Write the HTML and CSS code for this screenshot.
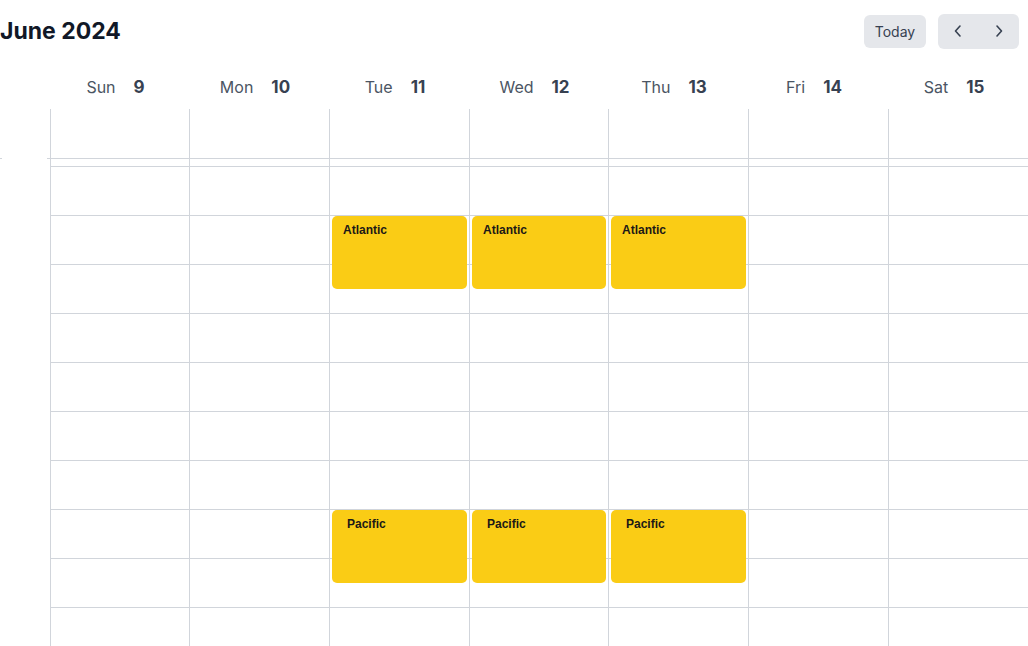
FILE: index.html
```html
<!DOCTYPE html>
<html lang="en">
<head>
<meta charset="utf-8">
<title>June 2024</title>
<link rel="stylesheet" href="styles.css">
</head>
<body>
<div class="app">
  <header class="topbar">
    <h1 class="title">June 2024</h1>
    <div class="controls">
      <button class="btn today">Today</button>
      <div class="btn nav">
        <span class="chev"><svg width="10" height="14" viewBox="0 0 10 14"><path d="M7 2 L2.5 7 L7 12" fill="none" stroke="#374151" stroke-width="1.6" stroke-linecap="round" stroke-linejoin="round"/></svg></span>
        <span class="chev"><svg width="10" height="14" viewBox="0 0 10 14"><path d="M3 2 L7.5 7 L3 12" fill="none" stroke="#374151" stroke-width="1.6" stroke-linecap="round" stroke-linejoin="round"/></svg></span>
      </div>
    </div>
  </header>

  <div class="dayhead">
    <div class="gutter-head"></div>
    <div class="dh"><span class="dn">Sun</span><span class="dd">9</span></div>
    <div class="dh"><span class="dn">Mon</span><span class="dd">10</span></div>
    <div class="dh"><span class="dn">Tue</span><span class="dd">11</span></div>
    <div class="dh"><span class="dn">Wed</span><span class="dd">12</span></div>
    <div class="dh"><span class="dn">Thu</span><span class="dd">13</span></div>
    <div class="dh"><span class="dn">Fri</span><span class="dd">14</span></div>
    <div class="dh"><span class="dn">Sat</span><span class="dd">15</span></div>
  </div>

  <div class="grid">
    <div class="gutter">
      <div class="g-allday"></div>
    </div>
    <div class="col">
      <div class="allday"></div><div class="spacer"></div>
      <div class="slot"></div><div class="slot"></div><div class="slot"></div><div class="slot"></div><div class="slot"></div><div class="slot"></div><div class="slot"></div><div class="slot"></div><div class="slot"></div><div class="slot"></div>
    </div>
    <div class="col">
      <div class="allday"></div><div class="spacer"></div>
      <div class="slot"></div><div class="slot"></div><div class="slot"></div><div class="slot"></div><div class="slot"></div><div class="slot"></div><div class="slot"></div><div class="slot"></div><div class="slot"></div><div class="slot"></div>
    </div>
    <div class="col">
      <div class="allday"></div><div class="spacer"></div>
      <div class="slot"></div>
      <div class="slot"><div class="event">Atlantic</div></div>
      <div class="slot"></div><div class="slot"></div><div class="slot"></div><div class="slot"></div><div class="slot"></div>
      <div class="slot"><div class="event pac">Pacific</div></div>
      <div class="slot"></div><div class="slot"></div>
    </div>
    <div class="col">
      <div class="allday"></div><div class="spacer"></div>
      <div class="slot"></div>
      <div class="slot"><div class="event">Atlantic</div></div>
      <div class="slot"></div><div class="slot"></div><div class="slot"></div><div class="slot"></div><div class="slot"></div>
      <div class="slot"><div class="event pac">Pacific</div></div>
      <div class="slot"></div><div class="slot"></div>
    </div>
    <div class="col">
      <div class="allday"></div><div class="spacer"></div>
      <div class="slot"></div>
      <div class="slot"><div class="event">Atlantic</div></div>
      <div class="slot"></div><div class="slot"></div><div class="slot"></div><div class="slot"></div><div class="slot"></div>
      <div class="slot"><div class="event pac">Pacific</div></div>
      <div class="slot"></div><div class="slot"></div>
    </div>
    <div class="col">
      <div class="allday"></div><div class="spacer"></div>
      <div class="slot"></div><div class="slot"></div><div class="slot"></div><div class="slot"></div><div class="slot"></div><div class="slot"></div><div class="slot"></div><div class="slot"></div><div class="slot"></div><div class="slot"></div>
    </div>
    <div class="col">
      <div class="allday"></div><div class="spacer"></div>
      <div class="slot"></div><div class="slot"></div><div class="slot"></div><div class="slot"></div><div class="slot"></div><div class="slot"></div><div class="slot"></div><div class="slot"></div><div class="slot"></div><div class="slot"></div>
    </div>
  </div>
</div>
</body>
</html>
```

FILE: styles.css
```css
html, body {
  margin: 0;
  padding: 0;
  background: #ffffff;
  overflow: hidden;
}
body {
  font-family: Inter, "Noto Sans", sans-serif;
  color: #111827;
}
.app {
  width: 1028px;
  height: 646px;
  overflow: hidden;
}
.topbar {
  height: 62px;
  display: flex;
  align-items: center;
  justify-content: space-between;
  padding-right: 9px;
}
.title {
  margin: 0;
  font-size: 23px;
  font-weight: 700;
  color: #111827;
  line-height: 1;
}
.controls {
  display: flex;
  align-items: center;
  gap: 12px;
}
.btn {
  background: #e5e7eb;
  border: none;
  border-radius: 6px;
  font-family: Inter, "Noto Sans", sans-serif;
  color: #374151;
}
.today {
  height: 33px;
  width: 62px;
  font-size: 14px;
  padding: 0;
  margin-top: 1px;
}
.nav {
  width: 81px;
  height: 35px;
  display: flex;
  align-items: center;
  justify-content: space-between;
  padding: 0 15px 0 15px;
  box-sizing: border-box;
}
.chev {
  display: flex;
  width: 10px;
  justify-content: center;
}
.dayhead {
  display: grid;
  grid-template-columns: 50px 139px 140px 140px 139px 140px 140px 140px;
  height: 47px;
}
.dh {
  display: flex;
  align-items: center;
  justify-content: center;
  gap: 18px;
  padding-right: 8px;
  padding-top: 3px;
}
.dn {
  font-size: 16px;
  color: #4b5563;
}
.dd {
  font-size: 17px;
  font-weight: 700;
  color: #374151;
}
.grid {
  display: grid;
  grid-template-columns: 50px 139px 140px 140px 139px 140px 140px 140px;
}
.gutter {
  position: relative;
}
.g-allday {
  height: 50px;
  position: relative;
}
.g-allday::before {
  content: "";
  position: absolute;
  left: 0;
  bottom: 0;
  width: 2px;
  height: 1px;
  background: #d1d5db;
}
.g-allday::after {
  content: "";
  position: absolute;
  right: 0;
  bottom: 0;
  width: 3px;
  height: 1px;
  background: #d1d5db;
}
.col {
  border-left: 1px solid #d1d5db;
}
.allday {
  height: 49px;
  border-bottom: 1px solid #d1d5db;
}
.spacer {
  height: 7px;
}
.slot {
  height: 48px;
  border-top: 1px solid #d1d5db;
  position: relative;
}
.event {
  position: absolute;
  top: 0;
  left: 2px;
  right: 2px;
  height: 73px;
  background: #facc15;
  border-radius: 5px;
  z-index: 2;
  font-family: "Liberation Sans", Arial, sans-serif;
  font-size: 12px;
  font-weight: 700;
  color: #1c1917;
  padding: 7px 0 0 11px;
  box-sizing: border-box;
}
.event.pac {
  padding-left: 15px;
}
```
